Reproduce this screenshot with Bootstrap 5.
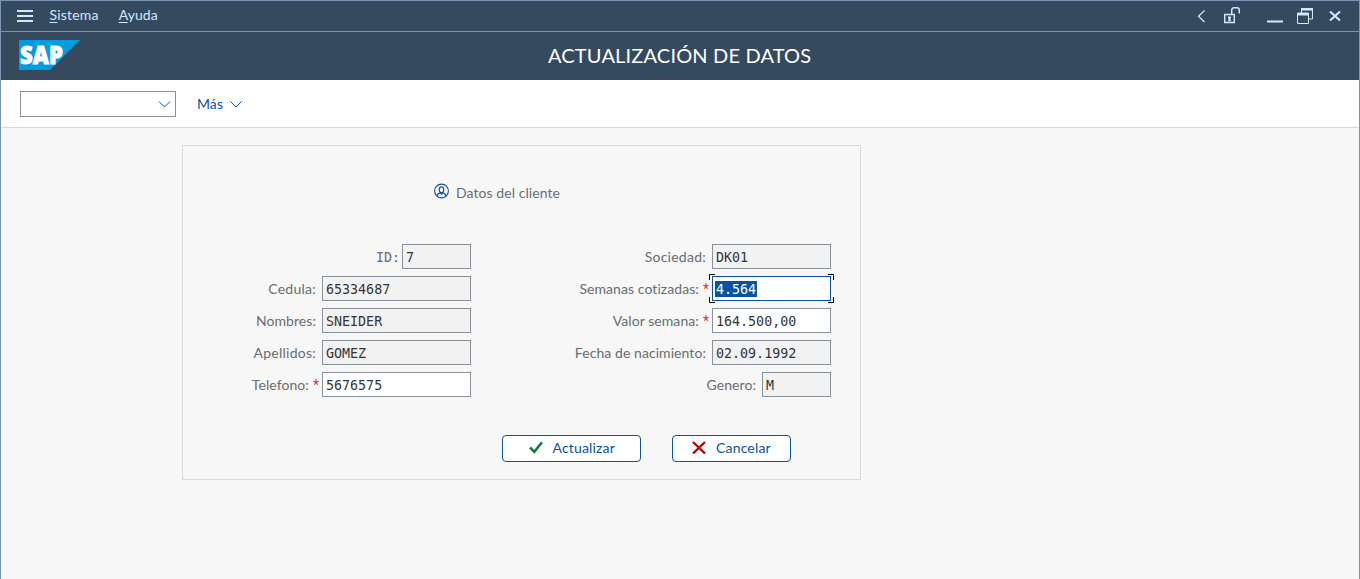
<!DOCTYPE html>
<html lang="es">
<head>
<meta charset="utf-8">
<meta name="viewport" content="width=device-width, initial-scale=1">
<title>Actualización de datos</title>
<link href="https://cdn.jsdelivr.net/npm/bootstrap@5.3.0/dist/css/bootstrap.min.css" rel="stylesheet">
<style>
body{font:14px/20px Lato,"Liberation Sans",sans-serif;letter-spacing:.07px;background:#f7f7f7;overflow:hidden}
svg{display:block;flex:none;overflow:visible}
.win{height:579px;border:solid #7996b5;border-width:1px 1px 0}
.menubar{height:31px;background:#354a5f;border-bottom:1px solid #7996b5;color:#d1e8ff;padding:0 17px 0 16px}
.menubar a{color:inherit;text-decoration:none;margin:0 0 2px 20px}
.menubar a.first{margin-left:16.5px;letter-spacing:.2px}
.menubar u{text-underline-offset:2px}
.titlebar{height:48px;background:#354a5f;padding:0 0 2px 18px}
.titlebar h1{font:20px/24px Lato,sans-serif;letter-spacing:.17px;color:#fff;left:547px;top:11px}
.sap{font:800 25px/30px "Open Sans",sans-serif}
.toolbar{height:48px;background:#fff;border-bottom:1px solid #d9d9d9;padding-left:19px;color:#0854a0}
.combo{width:156px;height:26px;border:1px solid #89919a;padding-right:4px;margin-right:21px}
.more{gap:7px}
.panel{width:679px;height:335px;margin:17px 0 0 181px;border:1px solid #d9d9d9;color:#6a6d70}
.caption{margin:37px 0 0 250px;gap:7px}
.fields{margin:41px 29px 0 63px}
.line{height:25px}
.line + .line{margin-top:7px}
.lcol{width:225px}.rcol{width:265px}
.lbl{margin-right:6px;white-space:nowrap}
.wide{letter-spacing:.25px}
.req{margin-right:3px;white-space:nowrap}
.req i{font:14px/20px Roboto,sans-serif;color:#d33;margin-left:4px}
.fld{width:149px;height:25px;border:1px solid #89919a;background:#f2f2f2;color:#32363a;font:13.33px/23px "DejaVu Sans Mono",monospace;letter-spacing:0;padding:1px 3px 0;flex:none;white-space:pre}
.rcol .fld{width:119px}
.line .short{width:69px}
.mono{font:13.33px/20px "DejaVu Sans Mono",monospace;letter-spacing:0;margin:2px 2px 0 0}
.edit{background:#fff}
.focus{border-color:#0854a0;position:relative}
.focus span{background:#0854a0;color:#fff;display:block;width:42px;height:16px;line-height:17px;margin:3px 0 0 -1px;padding-left:1px}
.focus svg{position:absolute;left:-4px;top:-3px}
.actions{margin:38px 0 0 319px;gap:31px}
.cmd{height:27px;border:1px solid #0854a0;border-radius:4px;background:#fff;color:#0854a0;letter-spacing:.17px;gap:9.5px;padding:0 0 0 26px}
.cmd span{margin-bottom:2px}
.update{width:139px}
.cancel{width:119px;padding-left:19px;gap:10px}
</style>
</head>
<body>
<div class="win d-flex flex-column">
<nav class="menubar d-flex align-items-center">
<svg width="16" height="12" fill="#d1e8ff"><path d="M0 0h16v2H0zM0 5h16v2H0zM0 10h16v2H0z"/></svg>
<a class="first" href="#"><u>S</u>istema</a>
<a href="#"><u>A</u>yuda</a>
<svg class="ms-auto" width="146" height="20" fill="none" stroke="#d1e8ff">
<path d="M8.500 4.500 2.500 10.200 8.500 16" stroke-width="1.200"/>
<path d="M28.700 8.500h9.600v8h-9.600zM35.700 8V4.500Q35.700 1.700 38 1.700h3Q43.300 1.700 43.300 4V7.500" stroke-width="1.400"/>
<path d="M32 10.500h3v2h-.7l.7 2.700h-3l.7-2.700H32z" fill="#d1e8ff" stroke="none"/>
<path d="M71 15.500h16" stroke-width="2"/>
<path d="M101.500 7h11v10.500h-11zM105.500 7V2.500h11v10.500h-3.500"/>
<path d="M101 8.200h12M105 3.200h12" stroke-width="2.600"/>
<path d="M134 5.500l10 9M144 5.500l-10 9" stroke-width="2.100"/>
</svg>
</nav>
<header class="titlebar d-flex align-items-center position-relative">
<svg width="62" height="30"><path fill="#009de0" d="M0 0h61L31 30H0z"/><text class="sap" x="1" y="23.500" fill="#fff" stroke="#fff" stroke-width=".9" textLength="43" lengthAdjust="spacingAndGlyphs">SAP</text></svg>
<h1 class="m-0 position-absolute">ACTUALIZACIÓN DE DATOS</h1>
</header>
<div class="toolbar d-flex align-items-center">
<div class="combo d-flex align-items-center justify-content-end"><svg width="13" height="8" fill="none" stroke="#0854a0"><path d="M1 1.500l5.500 5.500L12 1.500"/></svg></div>
<div class="more d-flex align-items-center"><span>Más</span>
<svg width="13" height="8" fill="none" stroke="#0854a0"><path d="M.5 1.500l5.500 5.500L11.500 1.500"/></svg></div>
</div>
<main class="panel">
<div class="caption d-flex"><svg width="16" height="16" fill="none" stroke="#0854a0" stroke-width="1.100"><circle cx="8.500" cy="8" r="6.900"/><ellipse cx="8.500" cy="6.700" rx="2.300" ry="2.800"/><path d="M4.300 13.200Q4.500 10.500 7 9.800L8.500 11.300 10 9.800Q12.500 10.500 12.700 13.200"/></svg><span>Datos del cliente</span></div>
<div class="fields d-flex justify-content-between">
<div class="lcol">
<div class="line d-flex justify-content-end align-items-center"><span class="mono">ID:</span><div class="fld short">7</div></div>
<div class="line d-flex justify-content-end align-items-center"><span class="lbl wide">Cedula:</span><div class="fld">65334687</div></div>
<div class="line d-flex justify-content-end align-items-center"><span class="lbl">Nombres:</span><div class="fld">SNEIDER</div></div>
<div class="line d-flex justify-content-end align-items-center"><span class="lbl wide">Apellidos:</span><div class="fld">GOMEZ</div></div>
<div class="line d-flex justify-content-end align-items-center"><span class="req">Telefono:<i>*</i></span><div class="fld edit">5676575</div></div>
</div>
<div class="rcol">
<div class="line d-flex justify-content-end align-items-center"><span class="lbl wide">Sociedad:</span><div class="fld">DK01</div></div>
<div class="line d-flex justify-content-end align-items-center"><span class="req">Semanas cotizadas:<i>*</i></span><div class="fld edit focus"><span>4.564</span><svg width="125" height="29" fill="none" stroke="#000"><path d="M6 .5H.5V6M119 .5h5.500V6M6 28.500H.5V23M119 28.500h5.500V23"/></svg></div></div>
<div class="line d-flex justify-content-end align-items-center"><span class="req">Valor semana:<i>*</i></span><div class="fld edit">164.500,00</div></div>
<div class="line d-flex justify-content-end align-items-center"><span class="lbl">Fecha de nacimiento:</span><div class="fld">02.09.1992</div></div>
<div class="line d-flex justify-content-end align-items-center"><span class="lbl">Genero:</span><div class="fld short">M</div></div>
</div>
</div>
<div class="actions d-flex">
<button type="button" class="cmd update d-flex align-items-center"><svg width="14" height="13" fill="none" stroke="#107e3e" stroke-width="2.500"><path d="M1 5.500l4.300 4.300L13 .2"/></svg><span>Actualizar</span></button>
<button type="button" class="cmd cancel d-flex align-items-center"><svg width="14" height="13" fill="none" stroke="#b00" stroke-width="2.400"><path d="M1 0l12 11.500M13 0L1 11.500"/></svg><span>Cancelar</span></button>
</div>
</main>
</div>
<script src="https://cdn.jsdelivr.net/npm/bootstrap@5.3.0/dist/js/bootstrap.bundle.min.js"></script>
</body>
</html>
